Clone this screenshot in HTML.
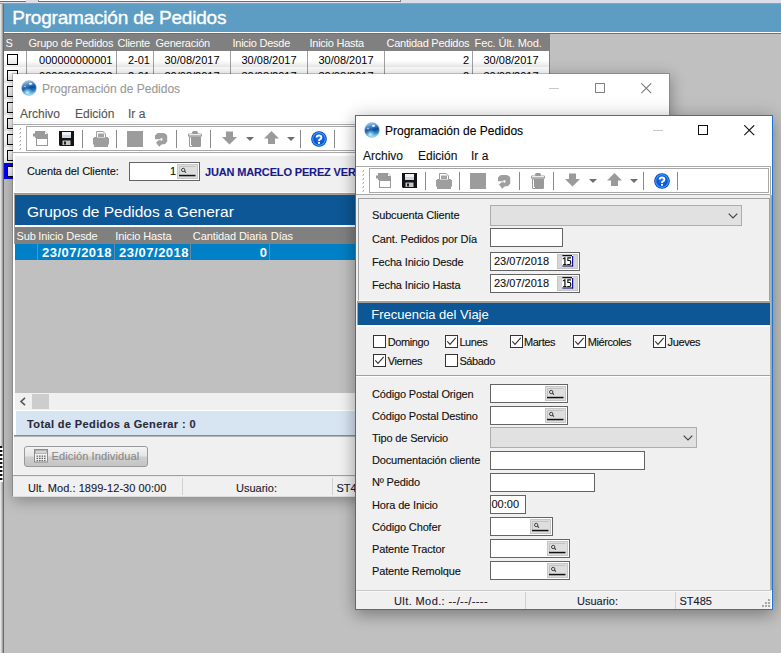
<!DOCTYPE html>
<html><head><meta charset="utf-8">
<style>
*{box-sizing:border-box;margin:0;padding:0}
html,body{width:781px;height:653px;overflow:hidden;background:#c0c0c0;font-family:"Liberation Sans",sans-serif;font-size:11px;color:#000}
.a{position:absolute}
.nw{white-space:nowrap}
.t11{-webkit-text-stroke:0.12px currentColor;font-size:11px;line-height:13px;white-space:nowrap;position:absolute}
.t12{-webkit-text-stroke:0.12px currentColor;font-size:12px;line-height:14px;white-space:nowrap;position:absolute}
/* main grid */
.gh{position:absolute;color:#fffbf2;font-size:11px;line-height:13px;white-space:nowrap;top:37px;letter-spacing:-0.25px}
.vsep{position:absolute;width:1px;background:#a0a0a0}
.cb{position:absolute;width:11px;height:11px;border:1px solid #000;background:linear-gradient(#fff,#e8e8e8)}
.cell{position:absolute;font-size:11px;line-height:13px;white-space:nowrap;text-align:right}
.gh2{position:absolute;color:#fffbf2;font-size:11px;line-height:13px;white-space:nowrap;top:157px;letter-spacing:-0.1px}
.rb{position:absolute;top:172px;font-size:13px;line-height:15px;font-weight:bold;color:#fff;white-space:nowrap;letter-spacing:0.5px}
.lbl{color:#111;letter-spacing:-0.15px}
.sbtn{width:21px;height:15px}
.win{overflow:hidden;background:#fff}
</style></head><body>

<!-- ===== top strip (MDI tabs) ===== -->
<div class="a" style="left:0;top:0;width:781px;height:3px;background:#dedee8"></div>
<div class="a" style="left:0;top:0;width:26px;height:2px;background:#fff;border-bottom:1px solid #6e6e6e"></div>
<div class="a" style="left:38px;top:0;width:363px;height:2px;background:#fff;border-bottom:1px solid #6e6e6e;border-left:1px solid #8a8a8a;border-right:1px solid #8a8a8a"></div>
<div class="a" style="left:0;top:3px;width:781px;height:1px;background:#a39b96"></div>

<!-- left frame edge -->
<div class="a" style="left:0;top:4px;width:4px;height:649px;background:linear-gradient(90deg,#f2f2f2 0,#d6d6d6 25%,#b0b0b0 60%,#6a6a6a 75%,#6a6a6a 100%)"></div>

<div class="a" style="left:0;top:446px;width:3px;height:36px;background:linear-gradient(90deg,transparent 2px,rgba(255,255,255,0.6) 2px),repeating-linear-gradient(#111 0,#111 1.6px,#fff 1.6px,#fff 4px)"></div>
<!-- ===== main blue header ===== -->
<div class="a" style="left:4px;top:4px;width:777px;height:28px;background:#5d9dc4"></div>
<div class="a nw" id="mainTitle" style="left:12.2px;top:6px;font-size:19px;line-height:24px;color:#fff;letter-spacing:-0.2px;-webkit-text-stroke:0.35px #fff">Programación de Pedidos</div>
<div class="a" style="left:4px;top:32px;width:777px;height:1px;background:#fff"></div>
<div class="a" style="left:4px;top:33px;width:777px;height:1px;background:#707070"></div>

<!-- ===== main grid ===== -->
<div class="a" style="left:4px;top:34px;width:546px;height:17px;background:#808080"></div>
<div class="gh" style="left:5.5px">S</div>
<div class="gh" style="left:28.5px">Grupo de Pedidos</div>
<div class="gh" style="left:117.5px">Cliente</div>
<div class="gh" style="left:155.5px">Generación</div>
<div class="gh" style="left:232.5px">Inicio Desde</div>
<div class="gh" style="left:309.5px">Inicio Hasta</div>
<div class="gh" style="left:386.5px">Cantidad Pedidos</div>
<div class="gh" style="left:474.5px;letter-spacing:-0.08px">Fec. Últ. Mod.</div>

<!-- rows -->
<div class="a" style="left:4px;top:51px;width:546px;height:112px;background:linear-gradient(#fff 0,#fff 60%,#ececec 100%);background-size:100% 16px"></div>
<div class="a" style="left:4px;top:163px;width:546px;height:16px;background:#0000ff"></div>
<div class="vsep" style="left:26px;top:51px;height:128px"></div>
<div class="vsep" style="left:116px;top:51px;height:128px"></div>
<div class="vsep" style="left:153px;top:51px;height:128px"></div>
<div class="vsep" style="left:230px;top:51px;height:128px"></div>
<div class="vsep" style="left:307px;top:51px;height:128px"></div>
<div class="vsep" style="left:384px;top:51px;height:128px"></div>
<div class="vsep" style="left:472px;top:51px;height:128px"></div>
<div class="a" style="left:549px;top:34px;width:1px;height:145px;background:#808080"></div>

<div class="cb" style="left:7px;top:54px"></div>
<div class="cb" style="left:7px;top:70px"></div>
<div class="cb" style="left:7px;top:86px"></div>
<div class="cb" style="left:7px;top:102px"></div>
<div class="cb" style="left:7px;top:118px"></div>
<div class="cb" style="left:7px;top:134px"></div>
<div class="cb" style="left:7px;top:150px"></div>
<div class="cb" style="left:7px;top:166px"></div>

<div class="cell" style="left:27px;width:85.5px;top:54px">000000000001</div>
<div class="cell" style="left:117px;width:33px;top:54px">2-01</div>
<div class="cell" style="left:154px;width:76px;top:54px;text-align:center">30/08/2017</div>
<div class="cell" style="left:231px;width:76px;top:54px;text-align:center">30/08/2017</div>
<div class="cell" style="left:308px;width:76px;top:54px;text-align:center">30/08/2017</div>
<div class="cell" style="left:385px;width:84px;top:54px">2</div>
<div class="cell" style="left:473px;width:76px;top:54px;text-align:center">30/08/2017</div>

<div class="cell" style="left:27px;width:85.5px;top:70px">000000000002</div>
<div class="cell" style="left:117px;width:33px;top:70px">2-01</div>
<div class="cell" style="left:154px;width:76px;top:70px;text-align:center">30/08/2017</div>
<div class="cell" style="left:231px;width:76px;top:70px;text-align:center">30/08/2017</div>
<div class="cell" style="left:308px;width:76px;top:70px;text-align:center">30/08/2017</div>
<div class="cell" style="left:385px;width:84px;top:70px">2</div>
<div class="cell" style="left:473px;width:76px;top:70px;text-align:center">30/08/2017</div>


<!-- ===== WIN2 (middle, inactive) ===== -->
<div id="w2" class="a win" style="left:12px;top:73px;width:658px;height:424px;box-shadow:1px 3px 14px rgba(0,0,0,0.32);background:transparent">
<div class="a" style="left:1px;top:1px;width:656px;height:422px;background:#fff"></div>
<div class="a" style="left:1px;top:1px;width:656px;height:49px;background:linear-gradient(#fff 0,#fff 47px,#f2f2f2 49px)"></div>
<svg class="a" style="left:9px;top:7px" width="16" height="16" viewBox="0 0 16 16">
<defs><linearGradient id="g2" x1="0.2" y1="0" x2="0.45" y2="1"><stop offset="0" stop-color="#b0d4f0"/><stop offset="0.3" stop-color="#4a8ed0"/><stop offset="0.55" stop-color="#0b4a94"/><stop offset="0.8" stop-color="#2e8ccc"/><stop offset="1" stop-color="#9adcf4"/></linearGradient><radialGradient id="g2r" cx="38%" cy="82%" r="40%"><stop offset="0" stop-color="#d8f8ff" stop-opacity="0.95"/><stop offset="1" stop-color="#6cc8f0" stop-opacity="0"/></radialGradient></defs>
<circle cx="8" cy="8" r="7.4" fill="url(#g2)" stroke="#a0b4c8" stroke-width="0.6"/>
<circle cx="8" cy="8" r="7.2" fill="url(#g2r)"/>
<ellipse cx="9.5" cy="3.8" rx="1.6" ry="1.1" fill="#fff" opacity="0.9"/>
<ellipse cx="4" cy="6.5" rx="1" ry="0.8" fill="#fff" opacity="0.6"/>
</svg>
<div class="t12" style="left:30px;top:9px;color:#9a9a9a">Programación de Pedidos</div>
<div class="a" style="left:537px;top:15px;width:10px;height:1px;background:#c8c8c8"></div>
<div class="a" style="left:583px;top:10px;width:10px;height:10px;border:1px solid #808080"></div>
<svg class="a" style="left:629px;top:10px" width="11" height="11" viewBox="0 0 11 11"><path d="M0.3 0.3 L10.2 10.2 M10.2 0.3 L0.3 10.2" stroke="#7a7a7a" stroke-width="1.1"/></svg>
<div class="t12" style="left:8px;top:34px;color:#555">Archivo</div>
<div class="t12" style="left:63px;top:34px;color:#555">Edición</div>
<div class="t12" style="left:116px;top:34px;color:#555">Ir a</div>
<svg class="a" style="left:0;top:51px" width="418" height="29" viewBox="0 0 418 29">
<rect x="1" y="1" width="416" height="27" fill="#fff"/>
<path d="M1 0.5 H415.5 V28.5 H1" fill="none" stroke="#a8a8a8"/>
<rect x="14.5" y="2.5" width="399" height="24" fill="none" stroke="#a8a8a8"/>
<g fill="#a8a8a8">
<rect x="8" y="4" width="1" height="1"/><rect x="8" y="8" width="1" height="1"/><rect x="8" y="12" width="1" height="1"/><rect x="8" y="16" width="1" height="1"/><rect x="8" y="20" width="1" height="1"/><rect x="8" y="24" width="1" height="1"/>
</g>
<g fill="#d4d4d4">
<rect x="7" y="5" width="2" height="1"/><rect x="7" y="9" width="2" height="1"/><rect x="7" y="13" width="2" height="1"/><rect x="7" y="17" width="2" height="1"/><rect x="7" y="21" width="2" height="1"/><rect x="7" y="25" width="2" height="1"/>
</g>
<!-- new -->
<g transform="translate(21,7)">
<rect x="0" y="2.5" width="3" height="3" fill="#9a9a9a"/>
<path d="M2 0 H12 L15 3 V7 H2 Z" fill="#9a9a9a"/>
<path d="M12 0.5 L14.5 3 H12 Z" fill="#fff"/>
<rect x="3.5" y="7.5" width="11" height="7" fill="#fff" stroke="#9a9a9a"/>
</g>
<!-- save -->
<g transform="translate(47,7)">
<path d="M0 0 H15 V15 H1 L0 14 Z" fill="#141414"/>
<rect x="3" y="1" width="9" height="6" fill="#d0d6e0"/>
<rect x="3" y="1" width="9" height="3" fill="#eceff4"/>
<rect x="3.5" y="9.5" width="8" height="4.5" fill="#c4c4c4"/>
<rect x="5" y="10.5" width="2" height="3" fill="#222"/>
</g>
<!-- print -->
<g transform="translate(81,7)">
<path d="M1 6 H15 V7 H16 V13.5 H15 V16 H1 V13.5 H0 V7 H1 Z" fill="#9e9e9e"/>
<path d="M3.5 0.5 H10.5 L12.5 2.5 V7 H3.5 Z" fill="#fff" stroke="#9e9e9e"/>
<rect x="5" y="2.5" width="6" height="3.5" fill="#a4a4a4"/>
<path d="M10.5 0.5 V2.5 H12.5" fill="#fff" stroke="#c8c8c8" stroke-width="0.8"/>
</g>
<!-- square -->
<rect x="115" y="7" width="16" height="16" fill="#9c9c9c"/>
<!-- undo -->
<g transform="translate(142,7)">
<path d="M4 2 H10 L12.5 3.5 L13.2 5 V10.5 L11.2 13 L7.5 13.6 L5.2 15.8 L2 11.5 L4.5 9.3 L6 9.3 L6.5 8.2 H1 V4.5 L2.5 3 Z" fill="#9e9e9e"/>
<path d="M6.3 7.2 H8.6 L8.2 9.6 L6.8 10 Z" fill="#fff"/>
</g>
<!-- trash -->
<g transform="translate(176,7)">
<rect x="4" y="0" width="6" height="3" rx="1.5" fill="#9a9a9a"/>
<rect x="0" y="2.4" width="14" height="3.4" rx="1" fill="#9a9a9a"/>
<rect x="1" y="3.2" width="12" height="1.1" fill="#fff"/>
<path d="M1 5.8 H13 V14.5 Q13 16 11.5 16 H2.5 Q1 16 1 14.5 Z" fill="#9a9a9a"/>
<rect x="2" y="6.5" width="1" height="8" fill="#fff"/>
<rect x="2" y="14" width="2" height="1" fill="#fff"/>
</g>
<!-- down -->
<g transform="translate(210,7)">
<path d="M4 0.5 H11 V6 H15 L7.5 13.5 L0 6 H4 Z" fill="#9a9a9a"/>
</g>
<path d="M234 13 H242 L238 17 Z" fill="#6e6e6e"/>
<!-- up -->
<g transform="translate(252,7)">
<path d="M7.5 0 L15 7.5 H11 V13 H4 V7.5 H0 Z" fill="#9a9a9a"/>
</g>
<path d="M275 13 H283 L279 17 Z" fill="#6e6e6e"/>
<!-- help -->
<g transform="translate(299,7)">
<defs><radialGradient id="hg" cx="50%" cy="45%" r="55%"><stop offset="0" stop-color="#1e78f0"/><stop offset="1" stop-color="#0a4cc8"/></radialGradient></defs>
<circle cx="8" cy="8" r="7.8" fill="#0838b0"/>
<circle cx="8" cy="8" r="7" fill="#2d9cff"/>
<circle cx="8" cy="8" r="5.7" fill="url(#hg)"/>
<path d="M5.6 6.6 Q5.6 4.5 8 4.5 Q10.4 4.5 10.4 6.4 Q10.4 7.7 8.9 8.4 Q8 8.8 8 9.9" fill="none" stroke="#fff" stroke-width="1.9"/>
<rect x="7.05" y="10.9" width="1.9" height="1.9" fill="#fff"/>
</g>
<g fill="#8a8a8a">
<rect x="70" y="6" width="1" height="18"/><rect x="104" y="6" width="1" height="18"/><rect x="164" y="6" width="1" height="18"/><rect x="198" y="6" width="1" height="18"/><rect x="288" y="6" width="1" height="18"/><rect x="322" y="6" width="1" height="18"/>
</g>
</svg>
<!-- panel cuenta -->
<div class="a" style="left:2px;top:80px;width:654px;height:39px;background:#f0f0f0;border-top:3px solid #fff;border-left:1px solid #fff"></div>
<div class="t11" style="left:15px;top:92px;color:#111;letter-spacing:-0.1px">Cuenta del Cliente:</div>
<div class="a" style="left:117px;top:89px;width:71px;height:19px;background:#fff;border:1px solid #646464"></div>
<div class="t11" style="left:150px;top:92px;width:14px;text-align:right;color:#111">1</div>
<div class="a sbtn" style="left:165px;top:91px"><svg width="21" height="15" viewBox="0 0 21 15" style="display:block"><rect x="0.5" y="0.5" width="20" height="14" fill="#dedede" stroke="#c6c6c6"/><path d="M2.5 11 V2.5 H18.5" fill="none" stroke="#c2c2c2"/><circle cx="6.2" cy="6" r="1.7" fill="none" stroke="#333" stroke-width="0.9"/><path d="M7.4 7.2 L8.9 8.7" stroke="#333" stroke-width="1.1"/><rect x="2" y="10.8" width="16.5" height="1.5" fill="#111"/></svg></div>
<div class="t11" style="left:193px;top:93px;color:#1a1a8c;font-weight:bold;letter-spacing:-0.15px">JUAN MARCELO PEREZ VERDE</div>
<div class="a" style="left:2px;top:119px;width:654px;height:1px;background:#fafafa"></div><div class="a" style="left:2px;top:120px;width:654px;height:1px;background:#9a9a9a"></div><div class="a" style="left:2px;top:121px;width:654px;height:1px;background:#a8a098"></div>
<div class="a" style="left:2px;top:121px;width:1px;height:50px;background:#a0a0a0"></div>
<!-- blue header -->
<div class="a" style="left:3px;top:122px;width:653px;height:30px;background:#0d5796"></div>
<div class="a nw" style="left:15px;top:130px;font-size:15.5px;line-height:18px;color:#fff">Grupos de Pedidos a Generar</div>
<div class="a" style="left:3px;top:152px;width:653px;height:2px;background:#fff"></div>
<!-- sub grid header -->
<div class="a" style="left:3px;top:154px;width:653px;height:17px;background:#808080"></div>
<div class="gh2" style="left:4.5px">Sub</div>
<div class="gh2" style="left:26.3px">Inicio Desde</div>
<div class="gh2" style="left:103.2px">Inicio Hasta</div>
<div class="gh2" style="left:180.8px">Cantidad Diaria</div>
<div class="gh2" style="left:258.8px">Días</div>
<div class="a" style="left:3px;top:171px;width:653px;height:16px;background:#0080c6"></div>
<div class="a" style="left:25px;top:171px;width:1px;height:16px;background:#6a8aa0"></div>
<div class="a" style="left:102px;top:171px;width:1px;height:16px;background:#6a8aa0"></div>
<div class="a" style="left:178px;top:171px;width:1px;height:16px;background:#6a8aa0"></div>
<div class="a" style="left:257px;top:171px;width:1px;height:16px;background:#6a8aa0"></div>
<div class="rb" style="left:30px">23/07/2018</div>
<div class="rb" style="left:107px">23/07/2018</div>
<div class="rb" style="left:179px;width:76.5px;text-align:right">0</div>
<div class="a" style="left:3px;top:187px;width:653px;height:133px;background:#c0c0c0"></div>
<!-- scrollbar -->
<div class="a" style="left:3px;top:320px;width:653px;height:17px;background:#f0f0f0"></div>
<svg class="a" style="left:7px;top:324px" width="8" height="9" viewBox="0 0 8 9"><path d="M6 0.8 L2 4.5 L6 8.2" fill="none" stroke="#555" stroke-width="1.6"/></svg>
<div class="a" style="left:20px;top:321px;width:17px;height:15px;background:#cdcdcd"></div>
<!-- total -->
<div class="a" style="left:3px;top:337px;width:653px;height:25px;background:#d7e4f2;border-top:1px solid #fff;border-left:1px solid #fff"></div>
<div class="t11" style="left:15px;top:345px;font-weight:bold;color:#2a2a3a;letter-spacing:0.38px">Total de Pedidos a Generar : 0</div>
<div class="a" style="left:2px;top:362px;width:654px;height:2px;background:linear-gradient(#8c8c8c 50%,#b4b4b4 50%)"></div>
<!-- button panel -->
<div class="a" style="left:2px;top:364px;width:654px;height:39px;background:#f0f0f0"></div>
<div class="a" style="left:12px;top:373px;width:124px;height:21px;border:1px solid #9a9a9a;border-radius:3px;background:linear-gradient(#f4f4f4 0,#e6e6e6 45%,#cfcfcf 55%,#c4c4c4 100%)"></div>
<svg class="a" style="left:22px;top:376px" width="14" height="14" viewBox="0 0 14 14"><rect x="0.5" y="0.5" width="13" height="12.5" fill="#f4f4f4" stroke="#8c8c8c"/><rect x="1.5" y="1.5" width="11" height="3" fill="#d4d4d4" stroke="#9a9a9a" stroke-width="0.6"/><g fill="#6a6a6a"><rect x="2.5" y="6.5" width="1.6" height="1.3"/><rect x="5" y="6.5" width="1.6" height="1.3"/><rect x="7.5" y="6.5" width="1.6" height="1.3"/><rect x="10" y="6.5" width="1.6" height="1.3"/><rect x="2.5" y="8.7" width="1.6" height="1.3"/><rect x="5" y="8.7" width="1.6" height="1.3"/><rect x="7.5" y="8.7" width="1.6" height="1.3"/><rect x="10" y="8.7" width="1.6" height="1.3"/><rect x="2.5" y="10.9" width="1.6" height="1.3"/><rect x="5" y="10.9" width="1.6" height="1.3"/><rect x="7.5" y="10.9" width="1.6" height="1.3"/><rect x="10" y="10.9" width="1.6" height="1.3"/></g></svg>
<div class="t11" style="left:39.5px;top:377px;color:#8a8a8a;letter-spacing:0.12px">Edición Individual</div>
<!-- status -->
<div class="a" style="left:1px;top:402px;width:656px;height:2px;background:linear-gradient(#a0a0a0 50%,#e8e8e8 50%)"></div>
<div class="a" style="left:1px;top:404px;width:656px;height:19px;background:#f0f0f0"></div>
<div class="a" style="left:170px;top:405px;width:1px;height:17px;background:#d0d0d0"></div>
<div class="a" style="left:320px;top:405px;width:1px;height:17px;background:#d0d0d0"></div>
<div class="t11" style="left:16px;top:409px;color:#1a1a30;letter-spacing:0.05px">Ult. Mod.: 1899-12-30 00:00</div>
<div class="t11" style="left:224px;top:409px;color:#1a1a30">Usuario:</div>
<div class="t11" style="left:324.5px;top:409px;color:#1a1a30">ST485</div>
<div class="a" style="left:0;top:0;width:658px;height:424px;border:1px solid rgba(0,0,0,0.27);border-bottom-color:#dcdcdc"></div>
</div>


<!-- ===== WIN3 (front, active) ===== -->
<div id="w3" class="a win" style="left:355px;top:115px;width:418px;height:495px;box-shadow:0 6px 14px rgba(0,0,0,0.26),0 -1px 18px rgba(0,0,0,0.14)">
<div class="a" style="left:0;top:0;width:416px;height:50px;background:#fff"></div>
<svg class="a" style="left:9px;top:7px" width="16" height="16" viewBox="0 0 16 16">
<defs><linearGradient id="g3" x1="0.2" y1="0" x2="0.45" y2="1"><stop offset="0" stop-color="#b0d4f0"/><stop offset="0.3" stop-color="#4a8ed0"/><stop offset="0.55" stop-color="#0b4a94"/><stop offset="0.8" stop-color="#2e8ccc"/><stop offset="1" stop-color="#9adcf4"/></linearGradient><radialGradient id="g3r" cx="38%" cy="82%" r="40%"><stop offset="0" stop-color="#d8f8ff" stop-opacity="0.95"/><stop offset="1" stop-color="#6cc8f0" stop-opacity="0"/></radialGradient></defs>
<circle cx="8" cy="8" r="7.4" fill="url(#g3)" stroke="#a0b4c8" stroke-width="0.6"/>
<circle cx="8" cy="8" r="7.2" fill="url(#g3r)"/>
<ellipse cx="9.5" cy="3.8" rx="1.6" ry="1.1" fill="#fff" opacity="0.9"/>
<ellipse cx="4" cy="6.5" rx="1" ry="0.8" fill="#fff" opacity="0.6"/>
</svg>
<div class="t12" style="left:30px;top:9px;color:#000">Programación de Pedidos</div>
<div class="a" style="left:298px;top:15px;width:10px;height:1px;background:#c8c8c8"></div>
<div class="a" style="left:343px;top:10px;width:10px;height:10px;border:1px solid #111"></div>
<svg class="a" style="left:389px;top:10px" width="11" height="11" viewBox="0 0 11 11"><path d="M0.3 0.3 L10.2 10.2 M10.2 0.3 L0.3 10.2" stroke="#111" stroke-width="1.15"/></svg>
<div class="t12" style="left:8px;top:34px;color:#111">Archivo</div>
<div class="t12" style="left:63px;top:34px;color:#111">Edición</div>
<div class="t12" style="left:116px;top:34px;color:#111">Ir a</div>
<svg class="a" style="left:0;top:51px" width="418" height="29" viewBox="0 0 418 29">
<rect x="1" y="1" width="416" height="27" fill="#fff"/>
<path d="M1 0.5 H415.5 V28.5 H1" fill="none" stroke="#a8a8a8"/>
<rect x="14.5" y="2.5" width="399" height="24" fill="none" stroke="#a8a8a8"/>
<g fill="#a8a8a8">
<rect x="8" y="4" width="1" height="1"/><rect x="8" y="8" width="1" height="1"/><rect x="8" y="12" width="1" height="1"/><rect x="8" y="16" width="1" height="1"/><rect x="8" y="20" width="1" height="1"/><rect x="8" y="24" width="1" height="1"/>
</g>
<g fill="#d4d4d4">
<rect x="7" y="5" width="2" height="1"/><rect x="7" y="9" width="2" height="1"/><rect x="7" y="13" width="2" height="1"/><rect x="7" y="17" width="2" height="1"/><rect x="7" y="21" width="2" height="1"/><rect x="7" y="25" width="2" height="1"/>
</g>
<!-- new -->
<g transform="translate(21,7)">
<rect x="0" y="2.5" width="3" height="3" fill="#9a9a9a"/>
<path d="M2 0 H12 L15 3 V7 H2 Z" fill="#9a9a9a"/>
<path d="M12 0.5 L14.5 3 H12 Z" fill="#fff"/>
<rect x="3.5" y="7.5" width="11" height="7" fill="#fff" stroke="#9a9a9a"/>
</g>
<!-- save -->
<g transform="translate(47,7)">
<path d="M0 0 H15 V15 H1 L0 14 Z" fill="#141414"/>
<rect x="3" y="1" width="9" height="6" fill="#d0d6e0"/>
<rect x="3" y="1" width="9" height="3" fill="#eceff4"/>
<rect x="3.5" y="9.5" width="8" height="4.5" fill="#c4c4c4"/>
<rect x="5" y="10.5" width="2" height="3" fill="#222"/>
</g>
<!-- print -->
<g transform="translate(81,7)">
<path d="M1 6 H15 V7 H16 V13.5 H15 V16 H1 V13.5 H0 V7 H1 Z" fill="#9e9e9e"/>
<path d="M3.5 0.5 H10.5 L12.5 2.5 V7 H3.5 Z" fill="#fff" stroke="#9e9e9e"/>
<rect x="5" y="2.5" width="6" height="3.5" fill="#a4a4a4"/>
<path d="M10.5 0.5 V2.5 H12.5" fill="#fff" stroke="#c8c8c8" stroke-width="0.8"/>
</g>
<!-- square -->
<rect x="115" y="7" width="16" height="16" fill="#9c9c9c"/>
<!-- undo -->
<g transform="translate(142,7)">
<path d="M4 2 H10 L12.5 3.5 L13.2 5 V10.5 L11.2 13 L7.5 13.6 L5.2 15.8 L2 11.5 L4.5 9.3 L6 9.3 L6.5 8.2 H1 V4.5 L2.5 3 Z" fill="#9e9e9e"/>
<path d="M6.3 7.2 H8.6 L8.2 9.6 L6.8 10 Z" fill="#fff"/>
</g>
<!-- trash -->
<g transform="translate(176,7)">
<rect x="4" y="0" width="6" height="3" rx="1.5" fill="#9a9a9a"/>
<rect x="0" y="2.4" width="14" height="3.4" rx="1" fill="#9a9a9a"/>
<rect x="1" y="3.2" width="12" height="1.1" fill="#fff"/>
<path d="M1 5.8 H13 V14.5 Q13 16 11.5 16 H2.5 Q1 16 1 14.5 Z" fill="#9a9a9a"/>
<rect x="2" y="6.5" width="1" height="8" fill="#fff"/>
<rect x="2" y="14" width="2" height="1" fill="#fff"/>
</g>
<!-- down -->
<g transform="translate(210,7)">
<path d="M4 0.5 H11 V6 H15 L7.5 13.5 L0 6 H4 Z" fill="#9a9a9a"/>
</g>
<path d="M234 13 H242 L238 17 Z" fill="#6e6e6e"/>
<!-- up -->
<g transform="translate(252,7)">
<path d="M7.5 0 L15 7.5 H11 V13 H4 V7.5 H0 Z" fill="#9a9a9a"/>
</g>
<path d="M275 13 H283 L279 17 Z" fill="#6e6e6e"/>
<!-- help -->
<g transform="translate(299,7)">
<defs><radialGradient id="hg3" cx="50%" cy="45%" r="55%"><stop offset="0" stop-color="#1e78f0"/><stop offset="1" stop-color="#0a4cc8"/></radialGradient></defs>
<circle cx="8" cy="8" r="7.8" fill="#0838b0"/>
<circle cx="8" cy="8" r="7" fill="#2d9cff"/>
<circle cx="8" cy="8" r="5.7" fill="url(#hg3)"/>
<path d="M5.6 6.6 Q5.6 4.5 8 4.5 Q10.4 4.5 10.4 6.4 Q10.4 7.7 8.9 8.4 Q8 8.8 8 9.9" fill="none" stroke="#fff" stroke-width="1.9"/>
<rect x="7.05" y="10.9" width="1.9" height="1.9" fill="#fff"/>
</g>
<g fill="#8a8a8a">
<rect x="70" y="6" width="1" height="18"/><rect x="104" y="6" width="1" height="18"/><rect x="164" y="6" width="1" height="18"/><rect x="198" y="6" width="1" height="18"/><rect x="288" y="6" width="1" height="18"/><rect x="322" y="6" width="1" height="18"/>
</g>
</svg>
<div class="a" style="left:0;top:80px;width:416px;height:414px;background:#f0f0f0"></div>
<!-- panel 1 -->
<div class="a" style="left:3px;top:83px;width:412px;height:103px;border:1px solid #a0a0a0;border-bottom-color:#fff;background:#f0f0f0"></div>
<div class="t11 lbl" style="left:17px;top:94px">Subcuenta Cliente</div>
<div class="a" style="left:135px;top:90px;width:252px;height:21px;background:#e1e1e1;border:1px solid #adadad"></div>
<svg class="a" style="left:373px;top:98px" width="10" height="6" viewBox="0 0 10 6"><path d="M0.7 0.7 L5 5 L9.3 0.7" fill="none" stroke="#444" stroke-width="1.2"/></svg>
<div class="t11 lbl" style="left:17px;top:118px">Cant. Pedidos por Día</div>
<div class="a" style="left:135px;top:113px;width:73px;height:19px;background:#fff;border:1px solid #646464;"></div>
<div class="t11 lbl" style="left:17px;top:141px">Fecha Inicio Desde</div>
<div class="a" style="left:135px;top:137px;width:90px;height:19px;background:#fff;border:1px solid #646464;"></div>
<div class="t11" style="left:139px;top:140px;color:#111">23/07/2018</div>
<svg class="a" style="left:202px;top:139px" width="21" height="15" viewBox="0 0 21 15"><rect x="0.5" y="0.5" width="20" height="14" fill="#d6d6d6" stroke="#c6c6c6"/><rect x="5" y="1" width="11" height="11.5" fill="#fff"/><rect x="5.3" y="1" width="9.7" height="1.3" fill="#111"/><rect x="15" y="2" width="1.2" height="10.5" fill="#1414a0"/><rect x="5.3" y="11.4" width="10.8" height="1.2" fill="#14146a"/><path d="M5.8 4.6 L7.4 3.3 H8.5 V10 H9.4 V11 H6.2 V10 H7.3 V4.8 L5.8 5.5 Z" fill="#111"/><path d="M10.3 3.3 H14 V4.4 H11.4 V6.1 H12.7 Q14.3 6.1 14.3 7.9 V9.2 Q14.3 11 12.6 11 H10.2 V10 H12.4 Q13.1 10 13.1 9.2 V8 Q13.1 7.1 12.4 7.1 H10.3 Z" fill="#111"/></svg>
<div class="t11 lbl" style="left:17px;top:164px">Fecha Inicio Hasta</div>
<div class="a" style="left:135px;top:159px;width:90px;height:19px;background:#fff;border:1px solid #646464;"></div>
<div class="t11" style="left:139px;top:162px;color:#111">23/07/2018</div>
<svg class="a" style="left:202px;top:161px" width="21" height="15" viewBox="0 0 21 15"><rect x="0.5" y="0.5" width="20" height="14" fill="#d6d6d6" stroke="#c6c6c6"/><rect x="5" y="1" width="11" height="11.5" fill="#fff"/><rect x="5.3" y="1" width="9.7" height="1.3" fill="#111"/><rect x="15" y="2" width="1.2" height="10.5" fill="#1414a0"/><rect x="5.3" y="11.4" width="10.8" height="1.2" fill="#14146a"/><path d="M5.8 4.6 L7.4 3.3 H8.5 V10 H9.4 V11 H6.2 V10 H7.3 V4.8 L5.8 5.5 Z" fill="#111"/><path d="M10.3 3.3 H14 V4.4 H11.4 V6.1 H12.7 Q14.3 6.1 14.3 7.9 V9.2 Q14.3 11 12.6 11 H10.2 V10 H12.4 Q13.1 10 13.1 9.2 V8 Q13.1 7.1 12.4 7.1 H10.3 Z" fill="#111"/></svg>
<!-- frecuencia -->
<div class="a" style="left:2px;top:186px;width:413px;height:2px;background:#a39e98"></div>
<div class="a" style="left:2px;top:188px;width:413px;height:22px;background:#0d5796;border-left:1px solid #a39e98"></div>
<div class="a nw" style="left:16.2px;top:192px;font-size:13px;line-height:15px;color:#fff">Frecuencia del Viaje</div>
<div class="a" style="left:2px;top:210px;width:413px;height:2px;background:#fff"></div>
<svg class="a" style="left:18px;top:220px" width="13" height="13" viewBox="0 0 13 13"><rect x="0.5" y="0.5" width="12" height="12" fill="#fff" stroke="#333"/></svg><div class="t11 lbl" style="left:32.8px;top:221px;letter-spacing:-0.4px">Domingo</div>
<svg class="a" style="left:90px;top:220px" width="13" height="13" viewBox="0 0 13 13"><rect x="0.5" y="0.5" width="12" height="12" fill="#fff" stroke="#333"/><path d="M2.3 6.3 L5 9.3 L10.7 2.8" fill="none" stroke="#333" stroke-width="1.1"/></svg><div class="t11 lbl" style="left:104.4px;top:221px;letter-spacing:-0.4px">Lunes</div>
<svg class="a" style="left:155px;top:220px" width="13" height="13" viewBox="0 0 13 13"><rect x="0.5" y="0.5" width="12" height="12" fill="#fff" stroke="#333"/><path d="M2.3 6.3 L5 9.3 L10.7 2.8" fill="none" stroke="#333" stroke-width="1.1"/></svg><div class="t11 lbl" style="left:168.9px;top:221px;letter-spacing:-0.4px">Martes</div>
<svg class="a" style="left:218px;top:220px" width="13" height="13" viewBox="0 0 13 13"><rect x="0.5" y="0.5" width="12" height="12" fill="#fff" stroke="#333"/><path d="M2.3 6.3 L5 9.3 L10.7 2.8" fill="none" stroke="#333" stroke-width="1.1"/></svg><div class="t11 lbl" style="left:232.7px;top:221px;letter-spacing:-0.4px">Miércoles</div>
<svg class="a" style="left:298px;top:220px" width="13" height="13" viewBox="0 0 13 13"><rect x="0.5" y="0.5" width="12" height="12" fill="#fff" stroke="#333"/><path d="M2.3 6.3 L5 9.3 L10.7 2.8" fill="none" stroke="#333" stroke-width="1.1"/></svg><div class="t11 lbl" style="left:312.6px;top:221px;letter-spacing:-0.4px">Jueves</div>
<svg class="a" style="left:18px;top:239px" width="13" height="13" viewBox="0 0 13 13"><rect x="0.5" y="0.5" width="12" height="12" fill="#fff" stroke="#333"/><path d="M2.3 6.3 L5 9.3 L10.7 2.8" fill="none" stroke="#333" stroke-width="1.1"/></svg><div class="t11 lbl" style="left:32.8px;top:240px;letter-spacing:-0.4px">Viernes</div>
<svg class="a" style="left:90px;top:239px" width="13" height="13" viewBox="0 0 13 13"><rect x="0.5" y="0.5" width="12" height="12" fill="#fff" stroke="#333"/></svg><div class="t11 lbl" style="left:104.4px;top:240px;letter-spacing:-0.4px">Sábado</div>
<div class="a" style="left:0;top:260px;width:416px;height:2px;background:linear-gradient(#a0a0a0 50%,#fff 50%)"></div>
<!-- lower form -->
<div class="t11 lbl" style="left:17px;top:273px">Código Postal Origen</div>
<div class="a" style="left:135px;top:269px;width:78px;height:19px;background:#fff;border:1px solid #646464;"></div>
<div class="a sbtn" style="left:190px;top:271px"><svg width="21" height="15" viewBox="0 0 21 15" style="display:block"><rect x="0.5" y="0.5" width="20" height="14" fill="#dedede" stroke="#c6c6c6"/><path d="M2.5 11 V2.5 H18.5" fill="none" stroke="#c2c2c2"/><circle cx="6.2" cy="6" r="1.7" fill="none" stroke="#333" stroke-width="0.9"/><path d="M7.4 7.2 L8.9 8.7" stroke="#333" stroke-width="1.1"/><rect x="2" y="10.8" width="16.5" height="1.5" fill="#111"/></svg></div>
<div class="t11 lbl" style="left:17px;top:295px">Código Postal Destino</div>
<div class="a" style="left:135px;top:291px;width:78px;height:19px;background:#fff;border:1px solid #646464;"></div>
<div class="a sbtn" style="left:190px;top:293px"><svg width="21" height="15" viewBox="0 0 21 15" style="display:block"><rect x="0.5" y="0.5" width="20" height="14" fill="#dedede" stroke="#c6c6c6"/><path d="M2.5 11 V2.5 H18.5" fill="none" stroke="#c2c2c2"/><circle cx="6.2" cy="6" r="1.7" fill="none" stroke="#333" stroke-width="0.9"/><path d="M7.4 7.2 L8.9 8.7" stroke="#333" stroke-width="1.1"/><rect x="2" y="10.8" width="16.5" height="1.5" fill="#111"/></svg></div>
<div class="t11 lbl" style="left:17px;top:317px">Tipo de Servicio</div>
<div class="a" style="left:135px;top:312px;width:207px;height:21px;background:#e1e1e1;border:1px solid #adadad"></div>
<svg class="a" style="left:328px;top:320px" width="10" height="6" viewBox="0 0 10 6"><path d="M0.7 0.7 L5 5 L9.3 0.7" fill="none" stroke="#444" stroke-width="1.2"/></svg>
<div class="t11 lbl" style="left:17px;top:339px">Documentación cliente</div>
<div class="a" style="left:135px;top:336px;width:155px;height:19px;background:#fff;border:1px solid #646464;"></div>
<div class="t11 lbl" style="left:17px;top:361px">Nº Pedido</div>
<div class="a" style="left:135px;top:358px;width:105px;height:19px;background:#fff;border:1px solid #646464;"></div>
<div class="t11 lbl" style="left:17px;top:384px">Hora de Inicio</div>
<div class="a" style="left:135px;top:380px;width:36px;height:19px;background:#fff;border:1px solid #646464;"></div>
<div class="t11" style="left:136.5px;top:383px;color:#111">00:00</div>
<div class="t11 lbl" style="left:17px;top:406px">Código Chofer</div>
<div class="a" style="left:135px;top:402px;width:63px;height:19px;background:#fff;border:1px solid #646464;"></div>
<div class="a sbtn" style="left:175px;top:404px"><svg width="21" height="15" viewBox="0 0 21 15" style="display:block"><rect x="0.5" y="0.5" width="20" height="14" fill="#dedede" stroke="#c6c6c6"/><path d="M2.5 11 V2.5 H18.5" fill="none" stroke="#c2c2c2"/><circle cx="6.2" cy="6" r="1.7" fill="none" stroke="#333" stroke-width="0.9"/><path d="M7.4 7.2 L8.9 8.7" stroke="#333" stroke-width="1.1"/><rect x="2" y="10.8" width="16.5" height="1.5" fill="#111"/></svg></div>
<div class="t11 lbl" style="left:17px;top:428px">Patente Tractor</div>
<div class="a" style="left:135px;top:424px;width:80px;height:19px;background:#fff;border:1px solid #646464;"></div>
<div class="a sbtn" style="left:192px;top:426px"><svg width="21" height="15" viewBox="0 0 21 15" style="display:block"><rect x="0.5" y="0.5" width="20" height="14" fill="#dedede" stroke="#c6c6c6"/><path d="M2.5 11 V2.5 H18.5" fill="none" stroke="#c2c2c2"/><circle cx="6.2" cy="6" r="1.7" fill="none" stroke="#333" stroke-width="0.9"/><path d="M7.4 7.2 L8.9 8.7" stroke="#333" stroke-width="1.1"/><rect x="2" y="10.8" width="16.5" height="1.5" fill="#111"/></svg></div>
<div class="t11 lbl" style="left:17px;top:450px">Patente Remolque</div>
<div class="a" style="left:135px;top:446px;width:80px;height:19px;background:#fff;border:1px solid #646464;"></div>
<div class="a sbtn" style="left:192px;top:448px"><svg width="21" height="15" viewBox="0 0 21 15" style="display:block"><rect x="0.5" y="0.5" width="20" height="14" fill="#dedede" stroke="#c6c6c6"/><path d="M2.5 11 V2.5 H18.5" fill="none" stroke="#c2c2c2"/><circle cx="6.2" cy="6" r="1.7" fill="none" stroke="#333" stroke-width="0.9"/><path d="M7.4 7.2 L8.9 8.7" stroke="#333" stroke-width="1.1"/><rect x="2" y="10.8" width="16.5" height="1.5" fill="#111"/></svg></div>
<div class="a" style="left:415px;top:80px;width:2px;height:395px;background:linear-gradient(90deg,#b8b8b8,#a0a0a0)"></div>
<!-- status -->
<div class="a" style="left:0;top:475px;width:416px;height:2px;background:linear-gradient(#c8c8c8 50%,#f8f8f8 50%)"></div>
<div class="a" style="left:0;top:477px;width:416px;height:17px;background:#f0f0f0"></div>
<div class="a" style="left:170px;top:477px;width:1px;height:17px;background:#d0d0d0"></div>
<div class="a" style="left:320px;top:477px;width:1px;height:17px;background:#d0d0d0"></div>
<div class="t11" style="left:39px;top:480px;color:#1a1a30;letter-spacing:0.4px">Ult. Mod.: --/--/----</div>
<div class="t11" style="left:222px;top:480px;color:#1a1a30">Usuario:</div>
<div class="t11" style="left:324.5px;top:480px;color:#1a1a30">ST485</div>
<svg class="a" style="left:406px;top:483px" width="10" height="10" viewBox="0 0 10 10"><g fill="#a8a8a8"><rect x="7" y="1" width="2" height="2"/><rect x="4" y="4" width="2" height="2"/><rect x="7" y="4" width="2" height="2"/><rect x="1" y="7" width="2" height="2"/><rect x="4" y="7" width="2" height="2"/><rect x="7" y="7" width="2" height="2"/></g></svg>
<div class="a" style="left:0;top:0;width:418px;height:495px;border:1px solid #1a79d4"></div>
</div>


</body></html>
